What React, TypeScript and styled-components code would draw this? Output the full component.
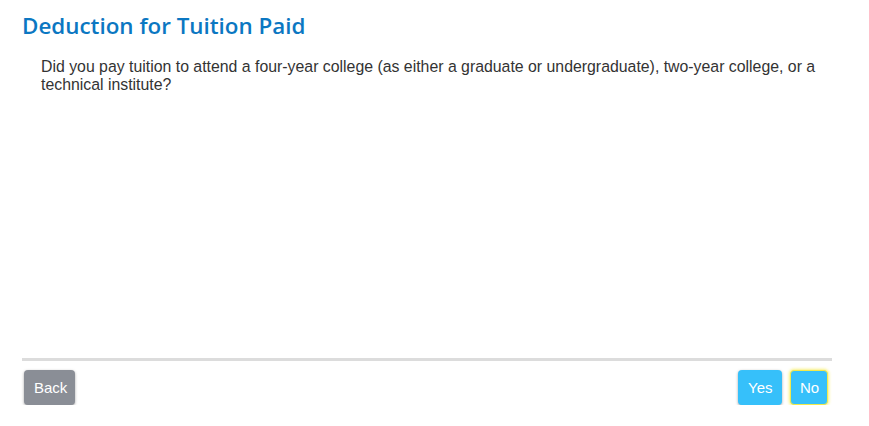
import React from 'react';
import styled, { createGlobalStyle } from 'styled-components';

const GlobalStyle = createGlobalStyle`
  body {
    margin: 0;
    background: #fff;
    font-family: "Liberation Sans", Arial, sans-serif;
  }
`;

const Page = styled.div`
  width: 810px;
  padding: 11px 22px 0;
`;

const Title = styled.h1`
  margin: 0;
  font-family: "Open Sans", Lato, sans-serif;
  font-weight: 600;
  font-size: 22.4px;
  line-height: 30px;
  color: #0b77c2;
`;

const Question = styled.p`
  margin: 17px 0 0 19px;
  font-size: 15.85px;
  line-height: 18px;
  color: #333;
  height: 300px;
`;

const Divider = styled.hr`
  margin: 0;
  border: 0;
  height: 3px;
  background: #dcdcdc;
`;

const Footer = styled.div`
  display: flex;
  align-items: center;
  padding: 9px 4px 0 2px;
  gap: 8px;
`;

const Spacer = styled.div`
  flex: 1;
`;

const Button = styled.button<{ $variant: 'back' | 'primary'; $focused?: boolean }>`
  height: 35px;
  padding: 0 9px;
  border: ${(p) => (p.$focused ? '1px solid #f2e94a' : '1px solid transparent')};
  border-radius: 4px;
  font-family: "Liberation Sans", Arial, sans-serif;
  font-size: 15px;
  color: #fff;
  background: ${(p) => (p.$variant === 'back' ? '#8a8e96' : '#36c0fa')};
  box-shadow: ${(p) =>
    p.$focused ? '0 0 3px 1px rgba(245, 235, 70, 0.7)' : '0 1px 3px rgba(0, 0, 0, 0.35)'};
  cursor: pointer;
`;

export default function App() {
  return (
    <Page>
      <GlobalStyle />
      <Title>Deduction for Tuition Paid</Title>
      <Question>
        Did you pay tuition to attend a four-year college (as either a graduate or undergraduate), two-year
        college, or a technical institute?
      </Question>
      <Divider />
      <Footer>
        <Button $variant="back" style={{ width: 51 }}>Back</Button>
        <Spacer />
        <Button $variant="primary" style={{ width: 44 }}>Yes</Button>
        <Button $variant="primary" $focused style={{ width: 38 }}>No</Button>
      </Footer>
    </Page>
  );
}
